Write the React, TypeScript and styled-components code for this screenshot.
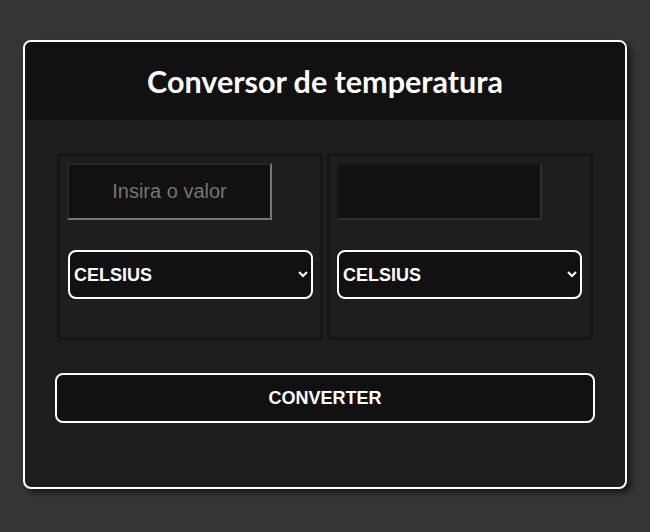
import React from "react";
import styled, { createGlobalStyle } from "styled-components";

const Global = createGlobalStyle`
  html, body { margin: 0; padding: 0; }
  body {
    background: #353535;
    width: 650px;
    height: 532px;
    overflow: hidden;
    font-family: "Liberation Sans", Arial, sans-serif;
  }
`;

const Page = styled.div`
  padding: 40px 0 0 23px;
`;

const Card = styled.div`
  width: 600px;
  height: 445px;
  border: 2px solid #ffffff;
  border-radius: 8px;
  background: #1e1e1e;
  box-shadow: 4px 4px 6px rgba(0, 0, 0, 0.55);
  overflow: hidden;
  display: flex;
  flex-direction: column;
`;

const Header = styled.header`
  height: 78px;
  background: #111111;
  display: flex;
  align-items: center;
  justify-content: center;
`;

const Title = styled.h1`
  margin: 0;
  color: #ffffff;
  font-family: Lato, "Liberation Sans", sans-serif;
  font-weight: 700;
  font-size: 30.5px;
`;

const Body = styled.div`
  padding: 33px 30px 0 30px;
  display: flex;
  flex-direction: column;
`;

const Panels = styled.div`
  display: flex;
  gap: 4px;
  padding: 0 2px;
`;

const Panel = styled.div`
  width: 266px;
  height: 187px;
  box-sizing: border-box;
  border: 3px solid #151515;
  border-radius: 4px;
  padding: 7px 7px 0 7px;
  display: flex;
  flex-direction: column;
  align-items: flex-start;
`;

const ValueInput = styled.input<{ $active?: boolean }>`
  width: 205px;
  height: 57px;
  box-sizing: border-box;
  background: #111111;
  border: 2px solid;
  border-color: ${(p) =>
    p.$active
      ? "#262626 #767676 #767676 #262626"
      : "#181818 #2e2e2e #2e2e2e #181818"};
  color: #ffffff;
  font-family: "Liberation Sans", Arial, sans-serif;
  font-size: 20px;
  text-align: center;
  outline: none;
  padding: 0;
  &::placeholder {
    color: #757575;
  }
`;

const Select = styled.select<{ $shift?: number }>`
  margin-top: 30px;
  margin-left: ${(p) => p.$shift ?? 0}px;
  width: 245px;
  height: 49px;
  box-sizing: border-box;
  background: #111111;
  color: #ffffff;
  border: 2px solid #ffffff;
  border-radius: 8px;
  font-family: "Liberation Sans", Arial, sans-serif;
  font-weight: 700;
  font-size: 18px;
  padding: 0;
  color-scheme: dark;
  outline: none;
`;

const Button = styled.button`
  margin-top: 33px;
  width: 540px;
  height: 50px;
  box-sizing: border-box;
  background: #111111;
  color: #ffffff;
  border: 2px solid #ffffff;
  border-radius: 8px;
  font-family: "Liberation Sans", Arial, sans-serif;
  font-weight: 700;
  font-size: 18px;
  cursor: pointer;
`;

export default function App() {
  return (
    <>
      <Global />
      <Page>
        <Card>
          <Header>
            <Title>Conversor de temperatura</Title>
          </Header>
          <Body>
            <Panels>
              <Panel>
                <ValueInput $active placeholder="Insira o valor" />
                <Select $shift={1} defaultValue="celsius">
                  <option value="celsius">CELSIUS</option>
                  <option value="fahrenheit">FAHRENHEIT</option>
                  <option value="kelvin">KELVIN</option>
                </Select>
              </Panel>
              <Panel>
                <ValueInput readOnly />
                <Select defaultValue="celsius">
                  <option value="celsius">CELSIUS</option>
                  <option value="fahrenheit">FAHRENHEIT</option>
                  <option value="kelvin">KELVIN</option>
                </Select>
              </Panel>
            </Panels>
            <Button>CONVERTER</Button>
          </Body>
        </Card>
      </Page>
    </>
  );
}
